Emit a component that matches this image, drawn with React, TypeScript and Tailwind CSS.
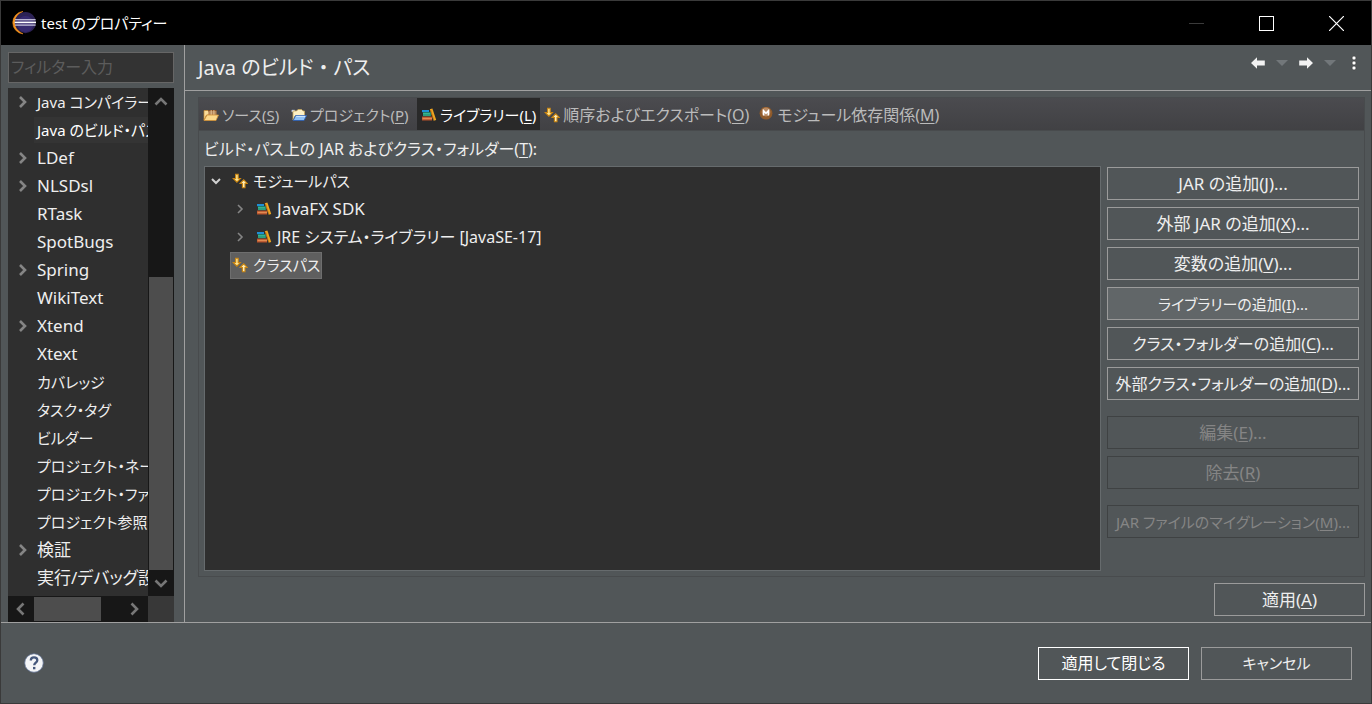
import React from "react";

const font =
  "font-['Noto_Sans','Noto_Sans_CJK_JP',sans-serif] [font-feature-settings:'palt']";

function Label({ text, mnemonic, suffix = "" }) {
  return (
    <span className="whitespace-nowrap">
      {text}
      {mnemonic && (
        <>
          (<span className="underline underline-offset-2">{mnemonic}</span>)
        </>
      )}
      {suffix}
    </span>
  );
}

function EclipseIcon() {
  return (
    <svg width="24" height="24" viewBox="0 0 24 24" className="shrink-0">
      <path d="M11 0.4A11.3 11.3 0 0 0 11 22.9A12.6 12.6 0 0 1 11 0.4Z" fill="#f7941e" stroke="#e88a1c" strokeWidth="0.6" />
      <circle cx="13.4" cy="11.6" r="10.6" fill="#2c2255" />
      <circle cx="13.4" cy="13" r="8" fill="#3d3080" opacity="0.6" />
      <rect x="3" y="8" width="20.6" height="1.4" fill="#b9b5d0" />
      <rect x="2.6" y="10.6" width="21.4" height="1.6" fill="#ffffff" />
      <rect x="3" y="13.4" width="20.6" height="1.4" fill="#b9b5d0" />
    </svg>
  );
}

function SourceIcon() {
  return (
    <svg width="16" height="16" viewBox="0 0 16 16" className="shrink-0">
      <path d="M1 3.5h4l1 1.5h3v3H3.5L1 13z" fill="#f9dc9a" stroke="#c98a2e" strokeWidth="0.7" />
      <rect x="5.5" y="3" width="8" height="6" fill="#8a4f22" />
      <path d="M5.5 5h8M5.5 7h8M8.2 3v6M10.9 3v6" stroke="#f2d6a8" strokeWidth="0.8" />
      <path d="M4 8h11.5L13 13.5H1z" fill="#fbd88b" stroke="#d08f35" strokeWidth="0.8" />
    </svg>
  );
}

function ProjectIcon() {
  return (
    <svg width="16" height="16" viewBox="0 0 16 16" className="shrink-0">
      <path d="M0.8 3h3v2h-3z" fill="#f4f6fb" stroke="#8a9cc0" strokeWidth="0.5" />
      <path d="M2 6V4h3.5L7 2.5h3.5L12 4h1.5v5H4l-2 4z" fill="#fdf0c4" stroke="#c9a85e" strokeWidth="0.8" />
      <path d="M4.6 8.5h11L13 13.5H2.2z" fill="#8fc1f5" stroke="#2f5fae" strokeWidth="0.9" />
      <path d="M5.2 9.3h9" stroke="#e2f1ff" strokeWidth="0.9" />
    </svg>
  );
}

function LibraryIcon() {
  return (
    <svg width="16" height="16" viewBox="0 0 16 16" className="shrink-0">
      <rect x="1" y="3" width="7" height="2.2" fill="#1e8fd6" />
      <rect x="2" y="5.2" width="8" height="4" fill="#1d8a72" />
      <path d="M2 6.5h7M2 8h7" stroke="#3fbf94" strokeWidth="0.8" />
      <rect x="1" y="9.6" width="10" height="3.9" fill="#b5502b" />
      <path d="M1.5 11.5h9.5" stroke="#e08a52" strokeWidth="1.5" />
      <path d="M8.8 2.2l2.6-.7 3.8 11.4-2.5.8z" fill="#f0a51f" />
      <path d="M9.6 3l3 10" stroke="#a8601a" strokeWidth="0.7" />
    </svg>
  );
}

function OrderIcon() {
  return (
    <svg width="16" height="16" viewBox="0 0 16 16" className="shrink-0">
      <path d="M3.6 1.3h2.6v4.2h2.2L4.9 9.2 1.2 5.5h2.4z" fill="#ffe48f" stroke="#c98512" strokeWidth="1.1" />
      <path d="M10.4 14.7H13v-4.2h2.3L11.7 6.8 8.1 10.5h2.3z" fill="#ffedb5" stroke="#c98512" strokeWidth="1.1" />
    </svg>
  );
}

function ModuleIcon() {
  return (
    <svg width="16" height="16" viewBox="0 0 16 16" className="shrink-0">
      <circle cx="8" cy="6.2" r="6.4" fill="#8f5a2a" />
      <circle cx="8" cy="5" r="4.4" fill="#b98a62" />
      <path d="M5.6 8.6V3.8L8 6.4l2.4-2.6v4.8" fill="none" stroke="#fff" strokeWidth="1.6" />
    </svg>
  );
}

function Chevron({ className = "", path = "M5 3l5 5-5 5", width = 2.6 }) {
  return (
    <svg width="16" height="16" viewBox="0 0 16 16" className={`shrink-0 ${className}`}>
      <path d={path} fill="none" stroke="currentColor" strokeWidth={width} />
    </svg>
  );
}

const pages = [
  { name: "Java コンパイラー", kana: true, children: true },
  { name: "Java のビルド・パス", kana: true, selected: true },
  { name: "LDef", children: true },
  { name: "NLSDsl", children: true },
  { name: "RTask" },
  { name: "SpotBugs" },
  { name: "Spring", children: true },
  { name: "WikiText" },
  { name: "Xtend", children: true },
  { name: "Xtext" },
  { name: "カバレッジ", kana: true },
  { name: "タスク・タグ", kana: true },
  { name: "ビルダー", kana: true },
  { name: "プロジェクト・ネーチャー", kana: true },
  { name: "プロジェクト・ファセット", kana: true },
  { name: "プロジェクト参照", kana: true },
  { name: "検証", children: true },
  { name: "実行/デバッグ設定" },
];

const tabs = [
  { text: "ソース", mnemonic: "S", icon: <SourceIcon />, style: "min-w-[88px] text-[15px]" },
  { text: "プロジェクト", mnemonic: "P", icon: <ProjectIcon />, style: "min-w-[130px] text-[15px]" },
  { text: "ライブラリー", mnemonic: "L", icon: <LibraryIcon />, style: "min-w-[123px] text-[15px]", active: true },
  { text: "順序およびエクスポート", mnemonic: "O", icon: <OrderIcon />, style: "min-w-[214px] text-base" },
  { text: "モジュール依存関係", mnemonic: "M", icon: <ModuleIcon />, style: "min-w-[195px] text-base" },
];

const actions = [
  { text: "JAR の追加", mnemonic: "J", size: "text-[17px]" },
  { text: "外部 JAR の追加", mnemonic: "X", size: "text-[17px]" },
  { text: "変数の追加", mnemonic: "V", size: "text-[17px]" },
  { text: "ライブラリーの追加", mnemonic: "I", size: "text-[15px]", hover: true },
  { text: "クラス・フォルダーの追加", mnemonic: "C", size: "text-base" },
  { text: "外部クラス・フォルダーの追加", mnemonic: "D", size: "text-base" },
];

function PushButton({ children, className = "", disabled = false }) {
  return (
    <button
      disabled={disabled}
      className={`h-[33px] border flex items-center justify-center disabled:border-[#3f4243] disabled:text-[#858585] ${className}`}
    >
      {children}
    </button>
  );
}

function TitleBar() {
  return (
    <header className="h-11 bg-black text-white flex items-center pl-[11px]">
      <EclipseIcon />
      <h1 className="ml-[5px] text-[15px]">test のプロパティー</h1>
      <div className="ml-auto flex self-stretch">
        <button aria-label="最小化" className="w-[70px] flex items-center justify-center text-[#3a3a3a]">
          <svg width="15" height="15" viewBox="0 0 15 15">
            <path d="M0 7.5h15" stroke="currentColor" />
          </svg>
        </button>
        <button aria-label="最大化" className="w-[70px] flex items-center justify-center">
          <svg width="15" height="15" viewBox="0 0 15 15">
            <rect x="0.5" y="0.5" width="14" height="14" fill="none" stroke="currentColor" />
          </svg>
        </button>
        <button aria-label="閉じる" className="w-[70px] flex items-center justify-center">
          <svg width="15" height="15" viewBox="0 0 15 15">
            <path d="M0 0l15 15M15 0L0 15" stroke="currentColor" strokeWidth="1.2" />
          </svg>
        </button>
      </div>
    </header>
  );
}

function Sidebar() {
  return (
    <aside className="w-[184px] shrink-0 border-r border-[#a0a0a0] pl-[7px] pr-2.5 pt-[7px] flex flex-col">
      <input
        type="text"
        aria-label="フィルター入力"
        placeholder="フィルター入力"
        className="h-[31px] w-full border border-[#666] bg-[#333] px-0.5 pb-0.5 text-base text-[#eee] placeholder:text-[#5c5c5c] outline-none"
      />
      <div className="mt-[5px] flex-1 flex bg-[#2f2f2f]">
        <ul className="flex-1 min-w-0 overflow-hidden">
          {pages.map((page) => (
            <li key={page.name} className="h-7 flex items-center">
              <span className="w-[26px] pl-1 shrink-0 flex justify-center">
                {page.children && <Chevron className="text-[#858585]" />}
              </span>
              <button
                className={`h-[26px] flex-1 min-w-0 overflow-hidden pl-[3px] text-left whitespace-nowrap ${
                  page.kana ? "text-[15px]" : "text-[17px]"
                } ${page.selected ? "bg-[#343434] text-white" : ""}`}
              >
                {page.name}
              </button>
            </li>
          ))}
        </ul>
        <div className="w-[26px] bg-[#171717] flex flex-col">
          <button aria-label="上へ" className="h-[26px] flex items-center justify-center text-[#777]">
            <Chevron path="M2.5 11.5L8 6l5.5 5.5" />
          </button>
          <div className="flex-[163]" />
          <div className="flex-[293] mx-px bg-[#4d4d4d]" />
          <button aria-label="下へ" className="h-[26px] flex items-center justify-center text-[#777]">
            <Chevron path="M2.5 5.5L8 11l5.5-5.5" />
          </button>
        </div>
      </div>
      <div className="h-[26px] flex bg-[#383838]">
        <div className="flex-1 flex bg-[#171717]">
          <button aria-label="左へ" className="w-[26px] flex items-center justify-center text-[#777]">
            <Chevron path="M10.5 2.5L5 8l5.5 5.5" />
          </button>
          <div className="flex-[67] my-px bg-[#4d4d4d]" />
          <div className="flex-[21]" />
          <button aria-label="右へ" className="w-[26px] flex items-center justify-center text-[#777]">
            <Chevron path="M4.5 2.5L10 8l-5.5 5.5" />
          </button>
        </div>
        <div className="w-[26px]" />
      </div>
    </aside>
  );
}

function PageHeader() {
  return (
    <div className="h-[46px] border-b border-[#a0a0a0] pl-[13px] pr-[9px] flex items-center">
      <h2 className="text-xl leading-6">
        Java のビルド<span className="[font-feature-settings:normal]">・</span>パス
      </h2>
      <div className="ml-auto mb-2.5 flex items-center">
        <button aria-label="戻る">
          <svg width="16" height="16" viewBox="0 0 16 16">
            <path d="M1 8l6-5.8v3.3h7.8v5H7v3.3z" fill="#f2f2f2" />
          </svg>
        </button>
        <button aria-label="戻る履歴" className="ml-2.5">
          <svg width="12" height="16" viewBox="0 0 12 16">
            <path d="M0 5h12l-6 6z" fill="#72777a" />
          </svg>
        </button>
        <button aria-label="進む" className="ml-2.5">
          <svg width="16" height="16" viewBox="0 0 16 16">
            <path d="M15 8L9 2.2v3.3H1.2v5H9v3.3z" fill="#f2f2f2" />
          </svg>
        </button>
        <button aria-label="進む履歴" className="ml-2.5">
          <svg width="12" height="16" viewBox="0 0 12 16">
            <path d="M0 5h12l-6 6z" fill="#72777a" />
          </svg>
        </button>
        <button aria-label="メニュー" className="ml-2.5">
          <svg width="16" height="16" viewBox="0 0 16 16" fill="#fff" stroke="#3a3a3a" strokeWidth="0.6">
            <circle cx="8" cy="3" r="2" />
            <circle cx="8" cy="8" r="2" />
            <circle cx="8" cy="13" r="2" />
          </svg>
        </button>
      </div>
    </div>
  );
}

function PathTree() {
  return (
    <ul className="flex-1 min-w-0 border border-[#666b6d] bg-[#2f2f2f] text-[#eee]">
      <li className="h-7 pl-[3px] flex items-center">
        <Chevron className="text-[#d0d0d0]" path="M4 6l4 4 4-4" width={2} />
        <span className="ml-2 flex items-center gap-[5px] text-[15px]">
          <OrderIcon />
          モジュールパス
        </span>
      </li>
      <li className="h-7 pl-[27px] flex items-center">
        <Chevron className="text-[#858585]" path="M6 4l4 4-4 4" width={1.6} />
        <span className="ml-2 flex items-center gap-[5px] text-[17px]">
          <LibraryIcon />
          JavaFX SDK
        </span>
      </li>
      <li className="h-7 pl-[27px] flex items-center">
        <Chevron className="text-[#858585]" path="M6 4l4 4-4 4" width={1.6} />
        <span className="ml-2 flex items-center gap-[5px]">
          <LibraryIcon />
          JRE システム・ライブラリー [JavaSE-17]
        </span>
      </li>
      <li className="h-7 pl-[25px] flex items-center">
        <span className="h-[27px] border border-[#6e6e6e] bg-[#5f5f5f] px-px flex items-center gap-[5px] text-[15px]">
          <OrderIcon />
          クラスパス
        </span>
      </li>
    </ul>
  );
}

function LibrariesTab() {
  return (
    <div className="flex-1 flex flex-col border border-t-0 border-[#484b4d] pl-[5px] pr-[5px] pb-[5px]">
      <p className="h-[35px] pt-1.5 text-[#eee]">
        <Label text="ビルド・パス上の JAR およびクラス・フォルダー" mnemonic="T" suffix=":" />
      </p>
      <div className="flex-1 flex gap-1.5">
        <PathTree />
        <div className="w-[252px] pt-px flex flex-col gap-[7px]">
          {actions.map((action) => (
            <PushButton
              key={action.mnemonic}
              className={`border-[#9b9b9b] ${action.size} ${action.hover ? "bg-[#616668]" : ""}`}
            >
              <Label text={action.text} mnemonic={action.mnemonic} suffix="..." />
            </PushButton>
          ))}
          <div className="mt-[9px] flex flex-col gap-[7px]">
            <PushButton disabled className="text-[17px]">
              <Label text="編集" mnemonic="E" suffix="..." />
            </PushButton>
            <PushButton disabled className="text-[17px]">
              <Label text="除去" mnemonic="R" />
            </PushButton>
          </div>
          <div className="mt-[9px] flex flex-col">
            <PushButton disabled className="text-[15px]">
              <Label text="JAR ファイルのマイグレーション" mnemonic="M" suffix="..." />
            </PushButton>
          </div>
        </div>
      </div>
    </div>
  );
}

export default function App() {
  return (
    <div className={`min-h-screen flex flex-col border border-[#3a3a3a] bg-[#515658] text-base leading-6 text-[#eee] ${font}`}>
      <TitleBar />
      <div className="flex-1 flex">
        <Sidebar />
        <main className="flex-1 min-w-0 flex flex-col">
          <PageHeader />
          <div className="flex-1 flex flex-col pl-[13px] pr-1.5 pt-1.5 pb-1.5">
            <div role="tablist" className="h-[34px] flex border border-[#484b4d] bg-linear-to-b from-[#4b4b4f] to-[#414144]">
              {tabs.map((tab) => (
                <button
                  key={tab.mnemonic}
                  role="tab"
                  aria-selected={!!tab.active}
                  className={`px-1 pt-0.5 flex items-center gap-[3px] ${tab.style} ${
                    tab.active ? "bg-[#292929] text-white" : "text-[#bbb]"
                  }`}
                >
                  {tab.icon}
                  <Label text={tab.text} mnemonic={tab.mnemonic} />
                </button>
              ))}
            </div>
            <LibrariesTab />
            <div className="mt-1.5 flex justify-end">
              <PushButton className="w-[151px] border-[#9b9b9b] text-[17px]">
                <Label text="適用" mnemonic="A" />
              </PushButton>
            </div>
          </div>
        </main>
      </div>
      <footer className="h-[81px] border-t border-[#a0a0a0] pl-[23px] pr-[19px] flex items-center gap-3">
        <button aria-label="ヘルプ" className="mr-auto">
          <svg width="20" height="20" viewBox="0 0 20 20">
            <circle cx="10" cy="10" r="9.3" fill="#f4f5f7" stroke="#5d6f92" strokeWidth="0.8" />
            <path d="M6.8 7.6C6.8 5.4 8.2 4.4 10 4.4s3.3 1.1 3.3 2.9c0 2.3-3.1 2.4-3.1 5" fill="none" stroke="#46587c" strokeWidth="2.3" />
            <rect x="9" y="13.9" width="2.4" height="2.4" fill="#46587c" />
          </svg>
        </button>
        <PushButton className="w-[151px] border-white text-white">適用して閉じる</PushButton>
        <PushButton className="w-[151px] border-[#9b9b9b] text-[15px]">キャンセル</PushButton>
      </footer>
    </div>
  );
}
